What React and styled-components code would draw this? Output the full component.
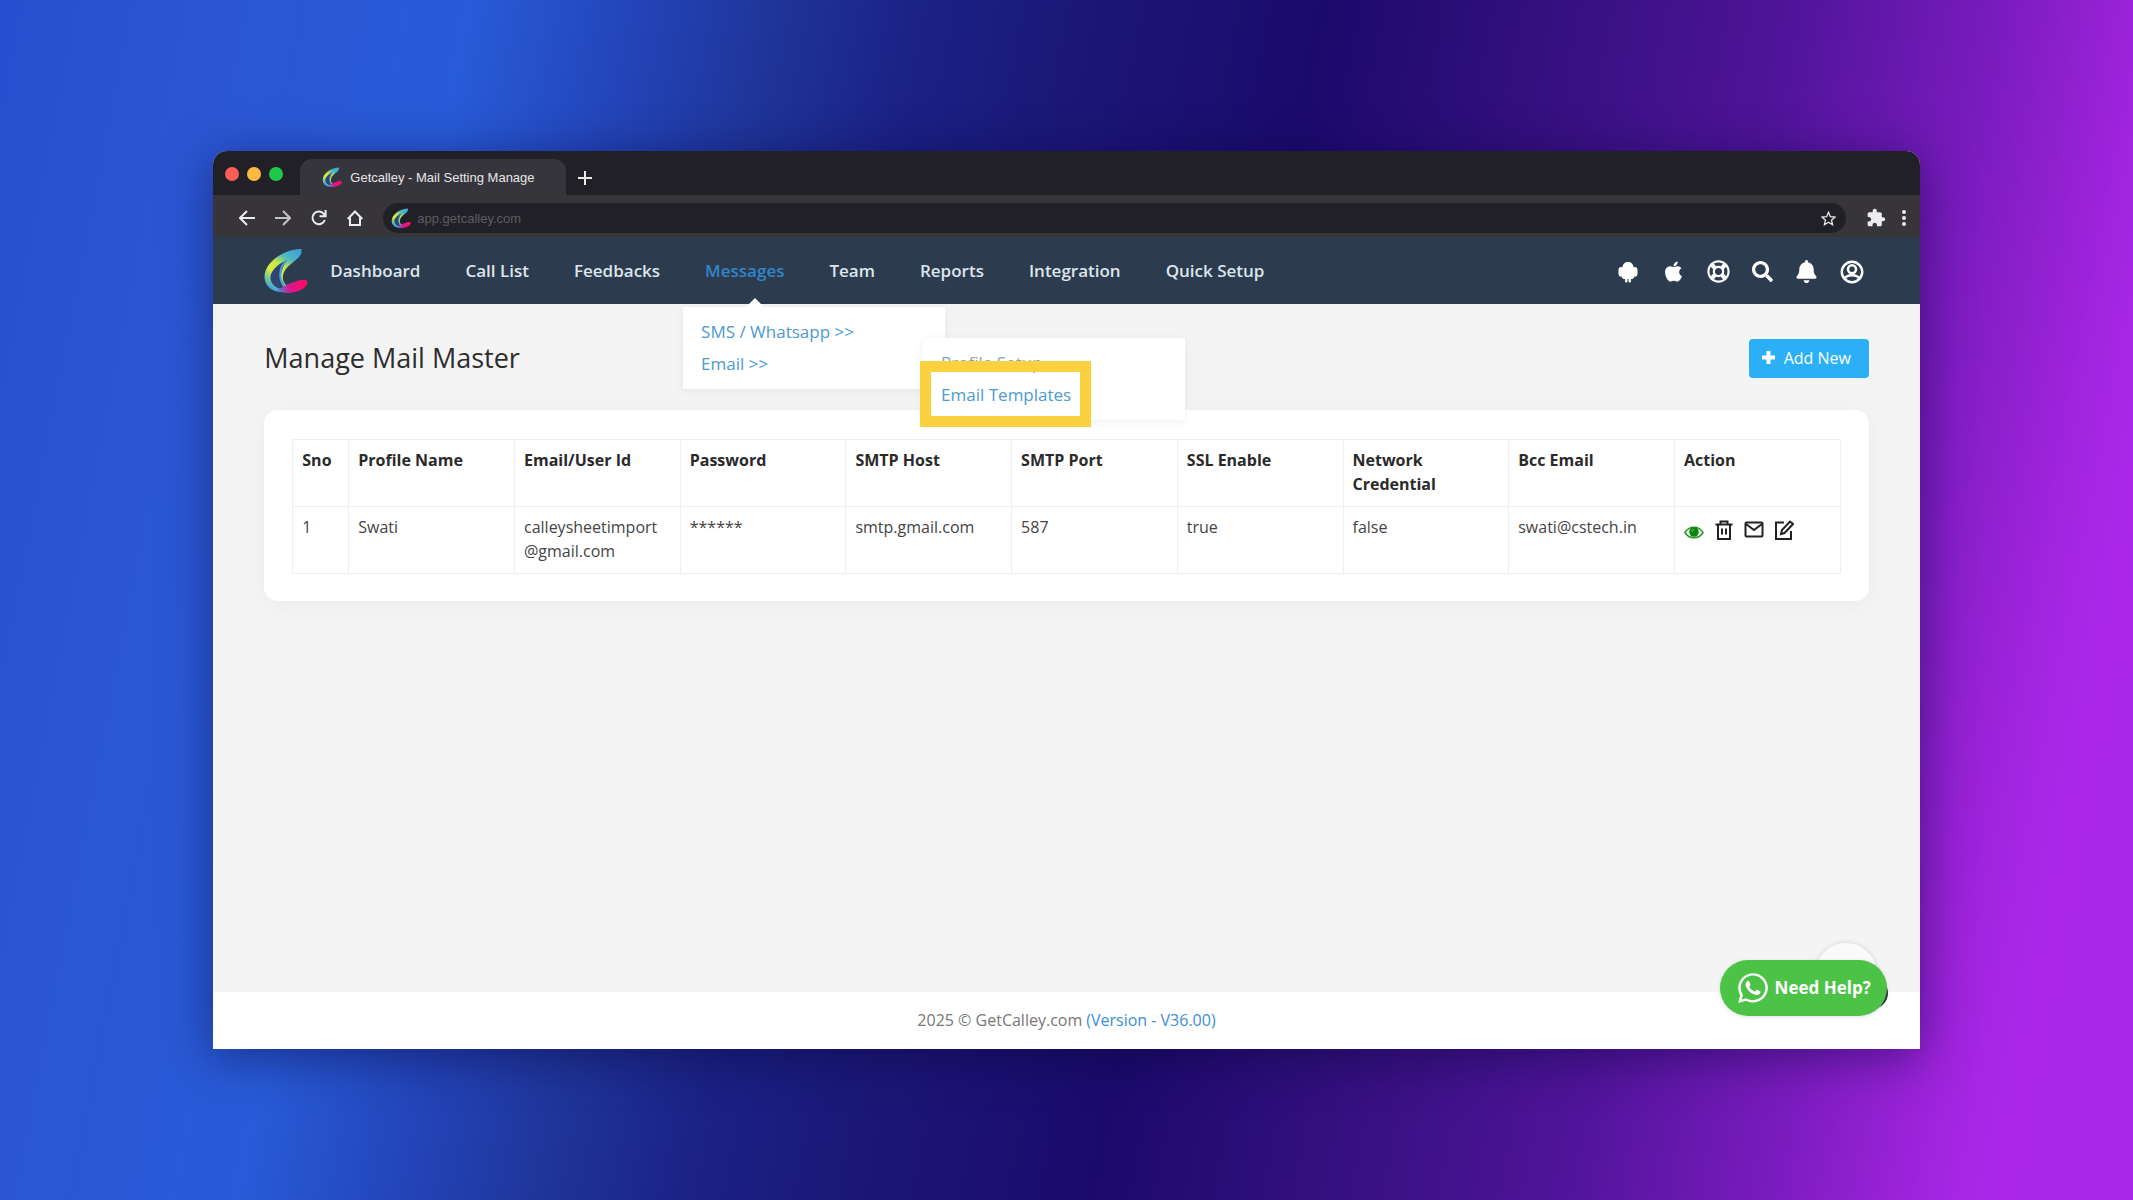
import React from 'react';
import styled, { createGlobalStyle, css } from 'styled-components';
import { FaApple, FaRegLifeRing, FaSearch, FaBell, FaWhatsapp, FaArrowUp } from 'react-icons/fa';
import { MdExtension } from 'react-icons/md';

const Global = createGlobalStyle`
  *, *::before, *::after { box-sizing: border-box; }
  body { margin: 0; font-family: 'Open Sans', 'Noto Sans', sans-serif; font-size: 16px; color: #3c3c3c; }
  button, input { font: inherit; }
  a { text-decoration: none; }
  svg { display: block; flex: none; }
`;

const Backdrop = styled.div`
  min-height: 100vh;
  padding: 151px 10%;
  background: linear-gradient(101deg, #2450cf 0%, #2b57d4 10%, #285bd8 20%, #2344b8 27%, #1f3498 33%, #1b2185 39%, #1b1777 46%, #1b0a6c 56%, #3a1184 68%, #50149a 76%, #7c1cc0 85%, #a024dd 91%, #ab28ea 94%, #a927ea 100%);
`;

const BrowserWindow = styled.div`
  display: flex;
  flex-direction: column;
  min-height: calc(100vh - 302px);
  border-radius: 14px 14px 0 0;
  box-shadow: 0 8px 48px rgba(10, 5, 60, 0.5);
  background: #f4f4f4;
`;

const TabStrip = styled.div`
  display: flex;
  align-items: flex-end;
  height: 44px;
  padding-left: 12px;
  background: #212026;
  border-radius: 14px 14px 0 0;
`;

const Lights = styled.div`
  display: flex;
  gap: 8px;
  width: 75px;
  padding-bottom: 14px;
`;

const Light = styled.span`
  width: 14px;
  height: 14px;
  border-radius: 50%;
  background: ${(p) => p.$color};
`;

const Tab = styled.div`
  display: flex;
  align-items: center;
  gap: 8px;
  height: 36px;
  width: 266px;
  padding: 0 22px;
  border-radius: 12px 12px 0 0;
  background: #37353c;
  color: #e6e6e8;
  font: 13px 'Liberation Sans', Arial, sans-serif;
  white-space: nowrap;
`;

const PlainButton = styled.button`
  display: inline-flex;
  align-items: center;
  justify-content: center;
  padding: 0;
  border: 0;
  background: none;
  color: ${(p) => p.$color || '#ececee'};
  cursor: pointer;
`;

const NewTab = styled(PlainButton)`
  width: 38px;
  height: 34px;
`;

const Toolbar = styled.div`
  display: flex;
  align-items: center;
  gap: 20px;
  height: 42px;
  padding: 4px 8px 0 26px;
  background: #37353a;
`;

const NavControls = styled.div`
  display: flex;
  gap: 20px;
`;

const AddressBar = styled.div`
  display: flex;
  align-items: center;
  gap: 6px;
  flex: 1;
  height: 30px;
  padding: 0 10px 0 8px;
  border-radius: 15px;
  background: #212026;
`;

const AddressInput = styled.input`
  flex: 1;
  min-width: 0;
  padding: 0;
  border: 0;
  outline: 0;
  background: none;
  color: #5d5c62;
  font: 13px 'Liberation Sans', Arial, sans-serif;
`;

const BrowserActions = styled.div`
  display: flex;
  align-items: center;
  gap: 10px;
`;

const AppHeader = styled.header`
  display: flex;
  align-items: center;
  height: 67px;
  padding: 0 56px 0 50px;
  background: #2c3b4d;
`;

const NavList = styled.ul`
  display: flex;
  gap: 45px;
  margin: 0 auto 0 22px;
  padding: 0;
  list-style: none;
`;

const NavItem = styled.li`
  position: relative;
  display: flex;
  align-items: center;
  height: 67px;
`;

const NavLink = styled.a`
  color: ${(p) => (p.$active ? '#3186c8' : '#dce5ee')};
  font-size: 17px;
  font-weight: 600;
  line-height: 24px;
  white-space: nowrap;
`;

const menuPanel = css`
  position: absolute;
  width: 262px;
  margin: 0;
  padding: 9px 18px;
  list-style: none;
  background: #fff;
  box-shadow: 0 2px 10px rgba(0, 0, 0, 0.06);
`;

const Menu = styled.ul`
  ${menuPanel}
  top: 70px;
  left: -22px;
  z-index: 2;

  &::before {
    content: '';
    position: absolute;
    left: 63px;
    top: -9px;
    border: 9px solid transparent;
    border-top: 0;
    border-bottom-color: #fff;
  }
`;

const SubMenu = styled.ul`
  ${menuPanel}
  top: 31px;
  left: 240px;
`;

const MenuLink = styled.a`
  display: block;
  color: ${(p) => (p.$muted ? '#8fa3b3' : '#4b9bd0')};
  font-size: 17px;
  line-height: 32px;
  white-space: nowrap;
`;

const Highlight = styled.span`
  position: absolute;
  top: 23px;
  left: -3px;
  width: 171px;
  height: 66px;
  border: 11px solid #fcd140;
  pointer-events: none;
`;

const HeaderActions = styled.div`
  display: flex;
  align-items: center;
  gap: 22px;
  padding-top: 2px;
`;

const Page = styled.main`
  flex: 1;
  padding: 35px 51px 0;
`;

const TitleRow = styled.div`
  display: flex;
  align-items: flex-start;
  justify-content: space-between;
  margin-bottom: 32px;
`;

const Title = styled.h1`
  margin: 0;
  color: #2d2d2d;
  font-size: 27px;
  font-weight: 400;
  line-height: 38px;
`;

const AddButton = styled.button`
  display: flex;
  align-items: center;
  gap: 9px;
  width: 120px;
  height: 39px;
  padding: 0 0 2px 13px;
  border: 0;
  border-radius: 4px;
  background: #2bb0f7;
  color: #fff;
  font-size: 16px;
  font-weight: 500;
  cursor: pointer;
`;

const Card = styled.section`
  padding: 29px 28px 27px;
  border-radius: 14px;
  background: #fff;
  box-shadow: 0 4px 24px rgba(0, 0, 0, 0.04);
`;

const Table = styled.table`
  width: 100%;
  table-layout: fixed;
  border-collapse: collapse;

  th, td {
    height: 67px;
    padding: 8px 9px;
    border: 1px solid #efefef;
    text-align: left;
    vertical-align: top;
    font-size: 16px;
    line-height: 24px;
  }
  th { color: #2a2a2a; font-weight: 700; }
  td { color: #444; }
  th:first-child { width: 56px; }
`;

const RowActions = styled.div`
  display: flex;
  gap: 10px;
  padding-top: 5px;
`;

const Footer = styled.footer`
  display: flex;
  justify-content: center;
  position: relative;
  padding: 16px 32px 17px;
  background: #fff;
  color: #777;
  line-height: 24px;

  a { color: #3b8fd4; margin-left: 4px; }
`;

const ScrollTop = styled(PlainButton)`
  position: absolute;
  right: 43px;
  bottom: 44px;
  width: 62px;
  height: 62px;
  padding-left: 10px;
  border-radius: 50%;
  background: #fafafa;
  box-shadow: 0 0 5px rgba(0, 0, 0, 0.14);
`;

const ChatDot = styled.span`
  position: absolute;
  right: 32px;
  bottom: 40px;
  width: 32px;
  height: 32px;
  border-radius: 50%;
  background: #2c3b3d;
`;

const HelpButton = styled.button`
  position: absolute;
  right: 33px;
  bottom: 33px;
  display: flex;
  align-items: center;
  justify-content: center;
  gap: 5px;
  width: 167px;
  height: 56px;
  padding: 0;
  border: 0;
  border-radius: 28px;
  background: #4cc247;
  color: #fff;
  font-size: 17px;
  font-weight: 700;
  box-shadow: 0 1px 4px rgba(0, 0, 0, 0.12);
  cursor: pointer;
`;

function Logo({ size, id }) {
  return (
    <svg width={size} height={size} viewBox="0 0 44 45" aria-hidden="true">
      <defs>
        <linearGradient id={`${id}-arc`} gradientUnits="userSpaceOnUse" x1="38" y1="2" x2="12" y2="44">
          <stop offset="0" stopColor="#3f9bd8" />
          <stop offset="0.28" stopColor="#4db9c4" />
          <stop offset="0.48" stopColor="#c9e548" />
          <stop offset="0.66" stopColor="#dcee3c" />
          <stop offset="0.84" stopColor="#7cc890" />
          <stop offset="1" stopColor="#3aa0e8" />
        </linearGradient>
        <linearGradient id={`${id}-tail`} x1="0" y1="0.5" x2="1" y2="0.4">
          <stop offset="0" stopColor="#4a8be0" />
          <stop offset="0.4" stopColor="#d8188c" />
          <stop offset="1" stopColor="#ff0a66" />
        </linearGradient>
      </defs>
      <path d="M38 1C22 1 1 13 1 29c0 10 9 16 20 15 5 0 7-4 3-6-5-3-6-9-3-15C25 16 38 10 38 4c0-2 0-3 0-3Z" fill={`url(#${id}-arc)`} />
      <path d="M23 12C13 17 6 24 7 31c1 6 7 11 14 10 1-1-4-4-4-10 0-7 3-13 6-19Z" fill="#2f4674" />
      <path d="M23 12c-8 8-8 20-2 26" fill="none" stroke="#3f9fe0" strokeWidth="2" />
      <path d="M13 42c5-1 8-5 15-7 7-3 15-5 16-1 0 6-9 10-18 11-6 0-10-1-13-3Z" fill={`url(#${id}-tail)`} />
    </svg>
  );
}

function Line({ size = 18, width = 2, viewBox = '0 0 24 24', children }) {
  return (
    <svg width={size} height={size} viewBox={viewBox} fill="none" stroke="currentColor" strokeWidth={width} aria-hidden="true">
      {children}
    </svg>
  );
}

function Android() {
  return (
    <svg width="22" height="24" viewBox="0 0 20 24" preserveAspectRatio="xMinYMid meet" fill="currentColor" aria-hidden="true">
      <path d="M4.500 7.500C4.500 4 7 2 10 2s5.500 2 5.500 5.500c2-1 4 0 4 2.500v4c0 2-1.500 3-3 2.500-.5 2-1.500 2.500-3.500 2.500v2c0 2-2.500 2-2.500 0v-2h-1v2c0 2-2.500 2-2.500 0v-2c-2 0-3-.5-3.500-2.500-1.500.5-3-.5-3-2.500v-4c0-2.500 2-3.500 4-2.500Z" />
    </svg>
  );
}

function Account() {
  return (
    <Line size={24} width={2.5}>
      <circle cx="12" cy="12" r="10.200" />
      <circle cx="12" cy="9.300" r="4" />
      <path d="M4.500 19c2-5 13-5 15 0" />
    </Line>
  );
}

function Eye() {
  return (
    <svg width="20" height="20" viewBox="0 0 20 20" aria-hidden="true">
      <path d="M1 12.500c4-7 14-7 18 0-4 7-14 7-18 0Z" fill="#fff" stroke="#2a9a2a" strokeWidth="1.6" />
      <circle cx="10" cy="12" r="4.800" fill="#0d850d" />
      <path d="M8 11.500c0-1.500 1-2 2-2" fill="none" stroke="#9ad69a" strokeWidth="1" />
    </svg>
  );
}

const navItems = ['Dashboard', 'Call List', 'Feedbacks', 'Messages', 'Team', 'Reports', 'Integration', 'Quick Setup'];
const columns = ['Sno', 'Profile Name', 'Email/User Id', 'Password', 'SMTP Host', 'SMTP Port', 'SSL Enable', 'Network Credential', 'Bcc Email', 'Action'];
const row = [
  '1',
  'Swati',
  <>calleysheetimport<wbr />@gmail.com</>,
  '******',
  'smtp.gmail.com',
  '587',
  'true',
  'false',
  'swati@cstech.in',
];

function MessagesMenu() {
  return (
    <Menu>
      <li><MenuLink href="#sms">SMS / Whatsapp &gt;&gt;</MenuLink></li>
      <li>
        <MenuLink href="#email">Email &gt;&gt;</MenuLink>
        <SubMenu>
          <li><MenuLink href="#profile" $muted>Profile Setup</MenuLink></li>
          <li><MenuLink href="#templates">Email Templates<Highlight /></MenuLink></li>
        </SubMenu>
      </li>
    </Menu>
  );
}

export default function App() {
  return (
    <Backdrop>
      <Global />
      <BrowserWindow>
        <TabStrip>
          <Lights>
            <Light $color="#fb5f58" />
            <Light $color="#fcbb40" />
            <Light $color="#1fc84b" />
          </Lights>
          <Tab><Logo size={20} id="tab" />Getcalley - Mail Setting Manage</Tab>
          <NewTab aria-label="New tab"><Line size={14} viewBox="0 0 14 14"><path d="M7 0v14M0 7h14" /></Line></NewTab>
        </TabStrip>
        <Toolbar>
          <NavControls>
            <PlainButton aria-label="Back"><Line size={16} viewBox="0 0 16 16"><path d="M16 8H1.500M8 1 1 8l7 7" /></Line></PlainButton>
            <PlainButton aria-label="Forward" $color="#c4c4c8"><Line size={16} viewBox="0 0 16 16"><path d="M0 8h14.500M8 1l7 7-7 7" /></Line></PlainButton>
            <PlainButton aria-label="Reload">
              <Line size={16} viewBox="0 0 16 16"><path d="M13.800 10A6.300 6.300 0 1 1 12.500 3.600L14 5.500M14.600 0v6.200H8.500" /></Line>
            </PlainButton>
            <PlainButton aria-label="Home">
              <Line size={16} viewBox="0 0 16 16"><path d="M0.700 9 8 1.500 15.300 9M3 7.500V15h10V7.500" /></Line>
            </PlainButton>
          </NavControls>
          <AddressBar>
            <Logo size={20} id="url" />
            <AddressInput aria-label="Address" defaultValue="app.getcalley.com" />
            <PlainButton aria-label="Bookmark">
              <Line size={15}><path d="m12 2 3 7 7.500.700-5.700 5 1.700 7.300L12 18l-6.500 4 1.700-7.300-5.700-5L9 9Z" /></Line>
            </PlainButton>
          </AddressBar>
          <BrowserActions>
            <PlainButton aria-label="Extensions"><MdExtension size={20} /></PlainButton>
            <PlainButton aria-label="Browser menu">
              <svg width="16" height="18" viewBox="0 0 16 18" fill="currentColor" aria-hidden="true">
                <circle cx="8" cy="3" r="2" /><circle cx="8" cy="9" r="2" /><circle cx="8" cy="15" r="2" />
              </svg>
            </PlainButton>
          </BrowserActions>
        </Toolbar>
        <AppHeader>
          <Logo size={45} id="brand" />
          <NavList>
            {navItems.map((name) => (
              <NavItem key={name}>
                <NavLink href={`#${name}`} $active={name === 'Messages'}>{name}</NavLink>
                {name === 'Messages' && <MessagesMenu />}
              </NavItem>
            ))}
          </NavList>
          <HeaderActions>
            <PlainButton aria-label="Android app" $color="#fff"><Android /></PlainButton>
            <PlainButton aria-label="Apple app" $color="#fff"><FaApple size={23} /></PlainButton>
            <PlainButton aria-label="Support" $color="#fff"><FaRegLifeRing size={23} /></PlainButton>
            <PlainButton aria-label="Search" $color="#fff"><FaSearch size={21} /></PlainButton>
            <PlainButton aria-label="Notifications" $color="#fff"><FaBell size={23} /></PlainButton>
            <PlainButton aria-label="Account" $color="#fff"><Account /></PlainButton>
          </HeaderActions>
        </AppHeader>
        <Page>
          <TitleRow>
            <Title>Manage Mail Master</Title>
            <AddButton>
              <Line size={13} width={4} viewBox="0 0 13 13"><path d="M6.500 0v13M0 6.500h13" /></Line>
              Add New
            </AddButton>
          </TitleRow>
          <Card>
            <Table>
              <thead>
                <tr>{columns.map((c) => <th key={c} scope="col">{c}</th>)}</tr>
              </thead>
              <tbody>
                <tr>
                  {row.map((c, i) => <td key={columns[i]}>{c}</td>)}
                  <td>
                    <RowActions>
                      <PlainButton aria-label="View"><Eye /></PlainButton>
                      <PlainButton aria-label="Delete" $color="#222">
                        <Line size={20} viewBox="0 0 20 20"><path d="M1.500 4.500h17M6.500 4V1.500h7V4M4 4.500V19h12V4.500M8 8.500v6M12 8.500v6" /></Line>
                      </PlainButton>
                      <PlainButton aria-label="Send mail" $color="#222">
                        <Line size={20} viewBox="0 0 20 20"><rect x="1.500" y="2.500" width="17" height="14" rx="1" /><path d="m2 4 8 6 8-6" /></Line>
                      </PlainButton>
                      <PlainButton aria-label="Edit" $color="#222">
                        <Line size={20} viewBox="0 0 20 20"><path d="M10 2.500H2V19h15v-8M7 14l1-4 8-8.500 3 2.500-8.500 9Z" /></Line>
                      </PlainButton>
                    </RowActions>
                  </td>
                </tr>
              </tbody>
            </Table>
          </Card>
        </Page>
        <Footer>
          <span>2025 © GetCalley.com<a href="#version">(Version - V36.00)</a></span>
          <ScrollTop aria-label="Back to top" $color="#3b8fd4"><FaArrowUp size={22} /></ScrollTop>
          <ChatDot />
          <HelpButton><FaWhatsapp size={34} />Need Help?</HelpButton>
        </Footer>
      </BrowserWindow>
    </Backdrop>
  );
}
